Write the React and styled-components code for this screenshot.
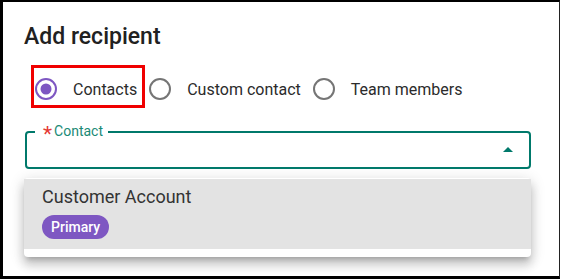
import React, { useState } from 'react';
import styled, { createGlobalStyle } from 'styled-components';

const GlobalStyle = createGlobalStyle`
  html, body {
    margin: 0;
    padding: 0;
    background: #ffffff;
  }
  body {
    font-family: Roboto, "Liberation Sans", Arial, sans-serif;
  }
`;

const Frame = styled.div`
  box-sizing: border-box;
  width: 560px;
  height: 279px;
  border-top: 2px solid #000;
  border-left: 3px solid #000;
  border-bottom: 3px solid #000;
  border-right: 1px solid #222;
  overflow: hidden;
`;

const Dialog = styled.div`
  display: flex;
  flex-direction: column;
  padding: 21px 28px 0 22px;
`;

const Title = styled.h2`
  margin: 0 0 0 -1px;
  font-size: 23px;
  line-height: 28px;
  font-weight: 500;
  color: #212121;
`;

const RadioRow = styled.div`
  display: flex;
  gap: 4px;
  margin: 16px 0 0 8px;
`;

const Option = styled.label`
  display: flex;
  align-items: center;
  gap: 16px;
  box-sizing: border-box;
  height: 39px;
  padding: 5px 6px 0 2px;
  font-size: 16px;
  color: #2b2b2b;
  cursor: pointer;
  outline: ${(p) => (p.$highlight ? '3px solid #f00000' : 'none')};
  outline-offset: -1px;
`;

const Circle = ({ checked }) => (
  <svg width="22" height="22" viewBox="0 0 22 22">
    <circle
      cx="11"
      cy="11"
      r="10"
      fill="none"
      stroke={checked ? '#7e57c2' : '#757575'}
      strokeWidth="2"
    />
    {checked && <circle cx="11" cy="11" r="5.5" fill="#7e57c2" />}
  </svg>
);

const Field = styled.div`
  position: relative;
  display: flex;
  align-items: center;
  justify-content: flex-end;
  box-sizing: border-box;
  height: 38px;
  margin-top: 25px;
  border: 2px solid #00796b;
  border-radius: 4px;
  padding-right: 9px;
`;

const Legend = styled.span`
  position: absolute;
  top: -10px;
  left: 8px;
  display: flex;
  align-items: center;
  gap: 2px;
  padding: 0 5px 0 8px;
  background: #ffffff;
  font-size: 14px;
  line-height: 17px;
  color: #1a8a76;
`;

const Star = styled.span`
  color: #e53935;
  font-size: 21px;
  line-height: 17px;
  position: relative;
  top: 3px;
`;

const Menu = styled.div`
  margin: 9px 0 0 -1px;
  padding: 1px 0 8px;
  background: #ffffff;
  border-radius: 4px;
  box-shadow: 0 5px 5px -3px rgba(0, 0, 0, 0.2),
    0 8px 10px 1px rgba(0, 0, 0, 0.14), 0 3px 14px 2px rgba(0, 0, 0, 0.12);
`;

const MenuItem = styled.div`
  display: flex;
  flex-direction: column;
  align-items: flex-start;
  gap: 7px;
  padding: 7px 18px 10px;
  background: ${(p) => (p.$active ? '#e3e3e3' : 'transparent')};
`;

const ItemName = styled.span`
  font-size: 18px;
  line-height: 22px;
  color: #333333;
`;

const Badge = styled.span`
  display: inline-flex;
  align-items: center;
  height: 24px;
  padding: 0 9px;
  border-radius: 12px;
  background: #7e57c2;
  color: #ffffff;
  font-size: 14px;
  font-weight: 500;
`;

const options = ['Contacts', 'Custom contact', 'Team members'];

export default function App() {
  const [selected, setSelected] = useState('Contacts');
  return (
    <>
      <GlobalStyle />
      <Frame>
        <Dialog>
          <Title>Add recipient</Title>
          <RadioRow>
            {options.map((o, i) => (
              <Option key={o} $highlight={i === 0} onClick={() => setSelected(o)}>
                <Circle checked={selected === o} />
                {o}
              </Option>
            ))}
          </RadioRow>
          <Field>
            <Legend>
              <Star>*</Star>Contact
            </Legend>
            <svg width="24" height="24" viewBox="0 0 24 24">
              <path d="M7 14l5-5 5 5z" fill="#00796b" />
            </svg>
          </Field>
          <Menu>
            <MenuItem $active>
              <ItemName>Customer Account</ItemName>
              <Badge>Primary</Badge>
            </MenuItem>
          </Menu>
        </Dialog>
      </Frame>
    </>
  );
}
